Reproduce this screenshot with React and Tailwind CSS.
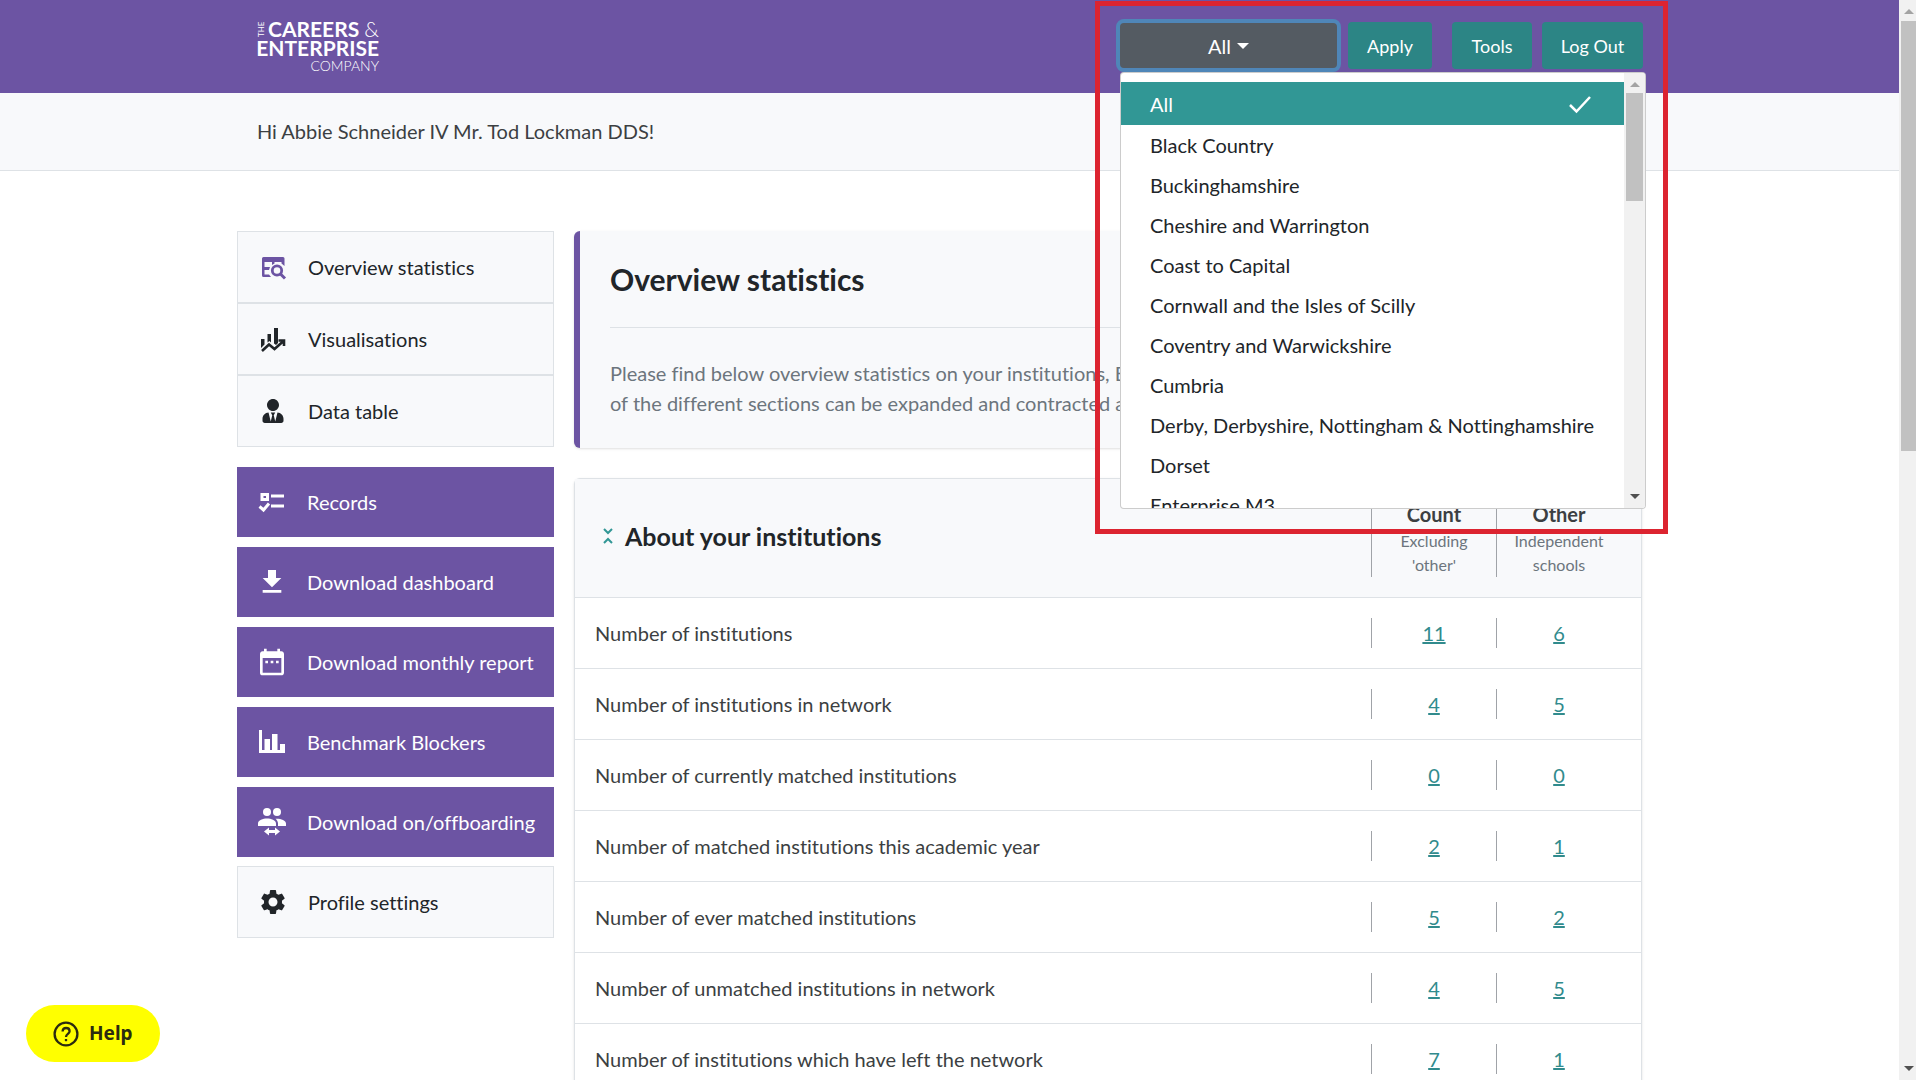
import { useState } from 'react';
import { MdDateRange, MdGetApp, MdSettings } from 'react-icons/md';
import { FaUserTie } from 'react-icons/fa';

const areas = [
  'All',
  'Black Country',
  'Buckinghamshire',
  'Cheshire and Warrington',
  'Coast to Capital',
  'Cornwall and the Isles of Scilly',
  'Coventry and Warwickshire',
  'Cumbria',
  'Derby, Derbyshire, Nottingham & Nottinghamshire',
  'Dorset',
  'Enterprise M3',
];

const rows = [
  { label: 'Number of institutions', count: 11, other: 6 },
  { label: 'Number of institutions in network', count: 4, other: 5 },
  { label: 'Number of currently matched institutions', count: 0, other: 0 },
  { label: 'Number of matched institutions this academic year', count: 2, other: 1 },
  { label: 'Number of ever matched institutions', count: 5, other: 2 },
  { label: 'Number of unmatched institutions in network', count: 4, other: 5 },
  { label: 'Number of institutions which have left the network', count: 7, other: 1 },
];

const TableSearchIcon = () => (
  <svg className="h-7 w-7 shrink-0 text-[#6c54a3]" viewBox="0 0 28 28" fill="none" stroke="currentColor">
    <path
      d="M4.500 4H24A1.500 1.500 0 0 1 25.500 5.500V13L22.500 10.500V9H15.500V10.500L13 12V9H5.500V14H11L10 17H5.500V21.500H10L12 24H4.500A1.500 1.500 0 0 1 3 22.500V5.500A1.500 1.500 0 0 1 4.500 4Z"
      fill="currentColor"
      stroke="none"
    />
    <circle cx="18" cy="17.500" r="4.700" strokeWidth="2.800" />
    <path d="M21 20.500L26 25.500" strokeWidth="3" />
  </svg>
);

const ChartArrowIcon = () => (
  <svg className="h-7 w-7 shrink-0" viewBox="0 0 28 28" fill="currentColor">
    <path d="M2 14H5.500V19.500L2 23ZM8.500 9H12V17.500L10.500 16L8.500 17.500ZM15 3H19V18L17 20L15 18.500Z" />
    <path
      d="M3 26L10 19.500L15.500 24L24 16.500M19.500 15.500H25V21"
      fill="none"
      stroke="currentColor"
      strokeWidth="2.600"
    />
  </svg>
);

const ChecklistIcon = () => (
  <svg className="h-7 w-7 shrink-0" viewBox="0 0 28 28" fill="none" stroke="currentColor" strokeWidth="3">
    <path d="M4 6.400H9.500V11.500H4ZM13 8H26M13 18H26M1.500 18.500L5.500 22L11 15.500" />
  </svg>
);

const BarsIcon = () => (
  <svg className="h-7 w-7 shrink-0" viewBox="0 0 28 28" fill="currentColor">
    <path d="M1 2H4V22H6.500V11H12V22H14V6H19.500V22H22V16H27V25H1Z" />
  </svg>
);

const GroupArrowIcon = () => (
  <svg className="h-7 w-7 shrink-0" viewBox="0 0 28 28" fill="currentColor">
    <circle cx="9" cy="4" r="4" />
    <circle cx="19" cy="4" r="4" />
    <path d="M0 18V15.500C0 12 5 10.500 9 10.500S18 12 18 15.500V18ZM20 18V15.500C20 13.500 19 12 17.500 10.700C22 10.300 28 12 28 15.500V18Z" />
    <path d="M6 23.500L11 19.500V22H17V19.500L22 23.500L17 27.500V25H11V27.500Z" />
  </svg>
);

const navLinks = [
  { label: 'Overview statistics', icon: <TableSearchIcon /> },
  { label: 'Visualisations', icon: <ChartArrowIcon /> },
  { label: 'Data table', icon: <FaUserTie className="h-6 w-6 shrink-0" /> },
];

const actions = [
  { label: 'Records', icon: <ChecklistIcon /> },
  { label: 'Download dashboard', icon: <MdGetApp className="h-8 w-8 shrink-0" /> },
  { label: 'Download monthly report', icon: <MdDateRange className="h-8 w-8 shrink-0" /> },
  { label: 'Benchmark Blockers', icon: <BarsIcon /> },
  { label: 'Download on/offboarding', icon: <GroupArrowIcon /> },
];

const Logo = () => (
  <a href="#home" aria-label="The Careers & Enterprise Company" className="block text-white">
    <svg className="h-14 w-[124px] overflow-visible" viewBox="0 0 124 56" fill="currentColor">
      <text transform="translate(7 19) rotate(-90)" fontSize="8">THE</text>
      <text x="11" y="19" fontSize="21" fontWeight="700">CAREERS</text>
      <text x="122" y="19" fontSize="21" fontWeight="300" textAnchor="end">&amp;</text>
      <text x="122" y="38" fontSize="21" fontWeight="700" textAnchor="end">ENTERPRISE</text>
      <text x="122" y="53" fontSize="14" fontWeight="300" textAnchor="end">COMPANY</text>
    </svg>
  </a>
);

const AreaMenu = ({ selected, onSelect }) => (
  <div className="absolute left-1 top-full z-20 flex h-[437px] w-[526px] overflow-hidden rounded border border-black/20 bg-white">
    <ul className="min-w-0 flex-1 overflow-hidden pt-[9px]">
      {areas.map((area) => (
        <li key={area}>
          <button
            type="button"
            onClick={() => onSelect(area)}
            className={`${
              area === selected
                ? 'h-[43px] bg-[#319795] text-white'
                : 'h-10 text-[#212529]'
            } flex w-full items-center justify-between whitespace-nowrap pl-[29px] pr-8 text-left`}
          >
            {area}
            {area === selected && (
              <svg className="h-6 w-6" viewBox="0 0 24 24" fill="none" stroke="currentColor" strokeWidth="2.500">
                <path d="M2 13L8.500 19.500L22 5" />
              </svg>
            )}
          </button>
        </li>
      ))}
    </ul>
    <div className="flex w-[21px] flex-col items-center bg-[#f1f1f1]">
      <svg className="h-5 w-3 shrink-0" viewBox="0 0 12 20" fill="#a3a3a3">
        <path d="M1 14L6 9L11 14Z" />
      </svg>
      <div className="h-[108px] w-[17px] bg-[#c1c1c1]" />
      <svg className="mt-auto h-5 w-3 shrink-0" viewBox="0 0 12 20" fill="#505050">
        <path d="M1 6L6 11L11 6Z" />
      </svg>
    </div>
  </div>
);

const Header = () => {
  const [area, setArea] = useState('All');
  const [isOpen, setIsOpen] = useState(true);

  const handleSelect = (value) => {
    setArea(value);
    setIsOpen(false);
  };

  return (
    <header className="bg-[#6c54a3]">
      <div className="mx-auto flex h-[93px] max-w-[1425px] items-center justify-between pb-[2px] pl-5 pr-[19px]">
        <Logo />
        <div className="flex items-center text-lg text-white">
          <div className="relative text-xl">
            <button
              type="button"
              onClick={() => setIsOpen(!isOpen)}
              className="flex h-[53px] w-[225px] items-center justify-center gap-[6px] rounded-lg border-4 border-[#4f86b8] bg-[#545b62]"
            >
              {area}
              <svg className="h-3 w-3" viewBox="0 0 12 12" fill="currentColor">
                <path d="M0 3H12L6 9Z" />
              </svg>
            </button>
            {isOpen && <AreaMenu selected={area} onSelect={handleSelect} />}
            <div className="pointer-events-none absolute -left-[21px] -top-[18px] z-30 h-[533px] w-[573px] border-[5px] border-[#dc2430]" />
          </div>
          <button type="button" className="ml-[7px] h-[47px] w-[84px] rounded bg-[#2c8585]">
            Apply
          </button>
          <button type="button" className="ml-5 h-[47px] w-20 rounded bg-[#2c8585]">
            Tools
          </button>
          <button type="button" className="ml-[10px] h-[47px] w-[101px] rounded bg-[#2c8585]">
            Log Out
          </button>
        </div>
      </div>
    </header>
  );
};

const Sidebar = () => (
  <aside className="w-[317px] shrink-0">
    <nav>
      {navLinks.map((link) => (
        <a
          key={link.label}
          href="#nav"
          className="flex h-[72px] items-center gap-[21px] border border-[#dee2e6] bg-[#f8f9fb] pl-5 text-[#212529]"
        >
          <span className="flex w-[29px] justify-center">{link.icon}</span>
          {link.label}
        </a>
      ))}
    </nav>
    <div className="mt-5 flex flex-col gap-[10px]">
      {actions.map((action) => (
        <button
          key={action.label}
          type="button"
          className="flex h-[70px] items-center gap-[21px] whitespace-nowrap bg-[#6c54a3] pl-5 text-white"
        >
          <span className="flex w-[29px] justify-center">{action.icon}</span>
          {action.label}
        </button>
      ))}
    </div>
    <a
      href="#settings"
      className="mt-[9px] flex h-[72px] items-center gap-[21px] border border-[#dee2e6] bg-[#f8f9fb] pl-5 text-[#212529]"
    >
      <span className="flex w-[29px] justify-center">
        <MdSettings className="h-[30px] w-[30px] shrink-0" />
      </span>
      Profile settings
    </a>
  </aside>
);

const Institutions = () => (
  <section className="mt-[30px] rounded-md border border-[#dee2e6] shadow-sm">
    <table className="w-full border-collapse text-left text-[#3c3f42]">
      <thead>
        <tr className="border-b border-[#dee2e6] bg-[#f8f9fb]">
          <th className="pb-1 pl-7">
            <div className="flex items-center gap-3 text-[25px] font-bold text-[#212529]">
              <svg className="h-[18px] w-[10px]" viewBox="0 0 10 18" fill="none" stroke="#319795" strokeWidth="2">
                <path d="M1 2L5 6L9 2M1 16L5 12L9 16" />
              </svg>
              <h2>About your institutions</h2>
            </div>
          </th>
          <th className="w-[125px] py-5">
            <div className="border-l border-[#a0a3a8] text-center leading-[30px]">
              Count
              <small className="block px-6 text-base font-normal text-[#6c757d]">Excluding 'other'</small>
            </div>
          </th>
          <th className="w-[145px] py-5 pr-5">
            <div className="border-l border-[#a0a3a8] text-center leading-[30px]">
              Other
              <small className="block text-base font-normal text-[#6c757d]">Independent schools</small>
            </div>
          </th>
        </tr>
      </thead>
      <tbody>
        {rows.map((row) => (
          <tr key={row.label} className="border-b border-[#dee2e6]">
            <td className="py-5 pl-5 leading-[30px]">{row.label}</td>
            <td className="py-5">
              <div className="border-l border-[#a0a3a8] text-center leading-[30px]">
                <a href="#count" className="text-[#318b8d] underline">
                  {row.count}
                </a>
              </div>
            </td>
            <td className="py-5 pr-5">
              <div className="border-l border-[#a0a3a8] text-center leading-[30px]">
                <a href="#other" className="text-[#318b8d] underline">
                  {row.other}
                </a>
              </div>
            </td>
          </tr>
        ))}
      </tbody>
    </table>
  </section>
);

const PageScrollbar = () => (
  <div className="flex w-[17px] shrink-0 flex-col items-end bg-[#f1f1f1]">
    <svg className="h-[21px] w-[15px] shrink-0" viewBox="0 0 15 21" fill="#a3a3a3">
      <path d="M3 14L8 9L13 14Z" />
    </svg>
    <div className="h-[430px] w-[15px] bg-[#c1c1c1]" />
    <svg className="mt-auto h-[21px] w-[15px] shrink-0" viewBox="0 0 15 21" fill="#505050">
      <path d="M3 7L8 12L13 7Z" />
    </svg>
  </div>
);

const App = () => {
  return (
    <div className="flex h-screen overflow-hidden bg-white font-['Lato',sans-serif] text-xl [font-variant-ligatures:none]">
      <div className="min-w-0 flex-1 overflow-hidden">
        <Header />
        <div className="border-b border-[#dee2e6] bg-[#f8f9fb]">
          <p className="mx-auto max-w-[1425px] px-5 pb-6 pt-[23px] leading-[30px] text-[#3c3f42]">
            Hi Abbie Schneider IV Mr. Tod Lockman DDS!
          </p>
        </div>
        <div className="mx-auto flex max-w-[1425px] items-start gap-5 pr-5 pt-[60px]">
          <Sidebar />
          <main className="min-w-0 flex-1">
            <section className="rounded-md border-l-[6px] border-[#6c54a3] bg-[#f8f9fb] px-[30px] pb-[30px] pt-[29px] shadow-sm">
              <h1 className="border-b border-[#dee2e6] pb-[29px] text-3xl leading-[38px] font-bold text-[#212529]">
                Overview statistics
              </h1>
              <p className="pt-[30px] leading-[30px] text-[#6c757d]">
                Please find below overview statistics on your institutions, Enterprise Advisers and Careers Leaders. Each
                <br />
                of the different sections can be expanded and contracted as required.
              </p>
            </section>
            <Institutions />
          </main>
        </div>
      </div>
      <PageScrollbar />
      <button
        type="button"
        className="fixed bottom-[18px] left-[26px] flex h-[57px] items-center gap-[10px] rounded-full bg-[#ffff00] px-[27px] font-['Noto_Sans',sans-serif] text-[19px] font-bold text-[#2b2b10]"
      >
        <svg className="h-[26px] w-[26px]" viewBox="0 0 26 26" fill="none" stroke="currentColor" strokeWidth="2.300">
          <circle cx="13" cy="13" r="11.400" />
          <path d="M9.600 10.500C9.600 5.700 16.600 6 16.600 10.200C16.600 13 13 12.800 13 16" />
          <path d="M13 18V20.200" />
        </svg>
        Help
      </button>
    </div>
  );
};

export default App;
